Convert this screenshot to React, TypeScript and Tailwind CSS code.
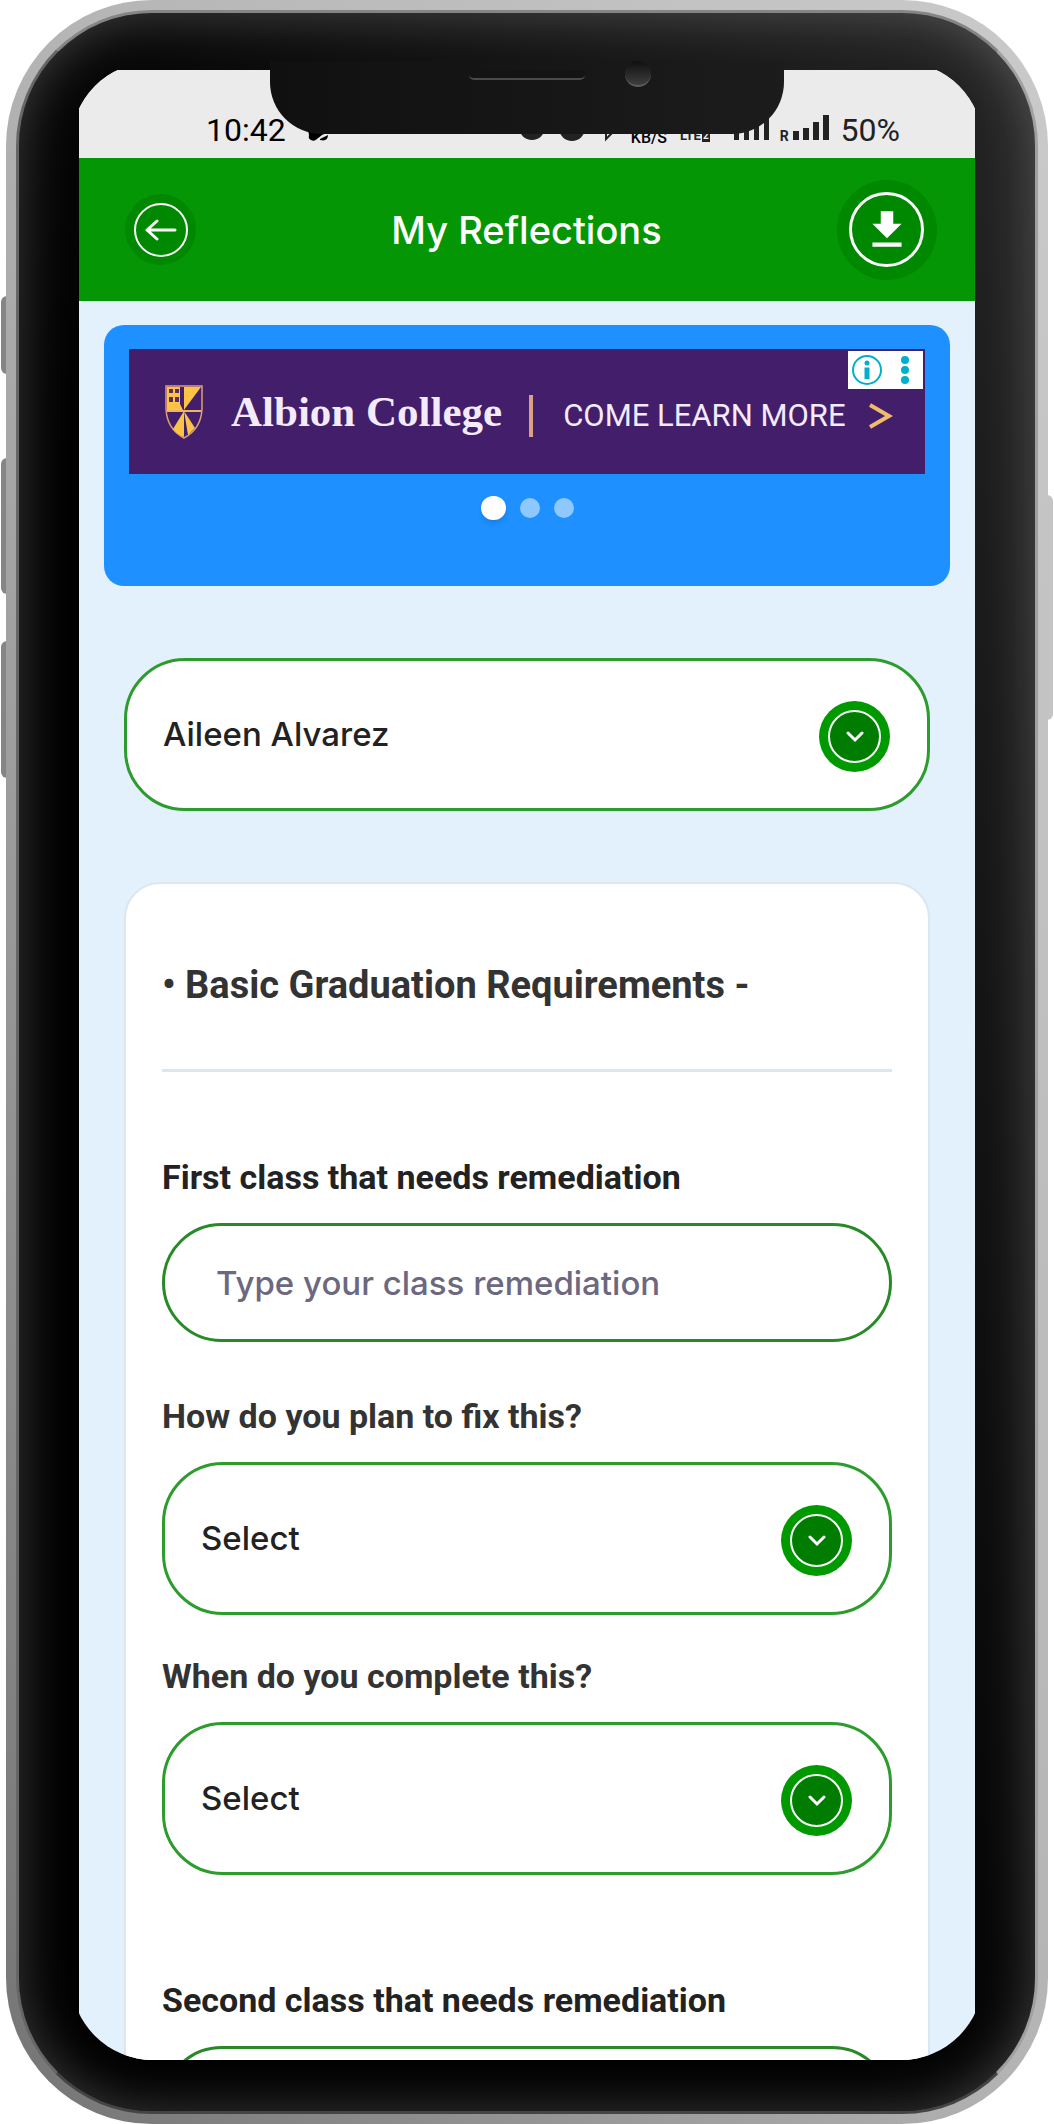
import { useState } from "react";

function StatusBar() {
  return (
    <div className="flex h-[88px] shrink-0 items-end justify-between bg-[#ebebeb] pr-[75px] pb-4 pl-[127px] font-['Roboto',sans-serif] text-[#222]">
      <div className="flex items-end gap-[22px]">
        <span className="text-[32px] leading-6 text-black">10:42</span>
        <svg className="h-[12px] w-[26px]" viewBox="0 0 26 12" fill="#000" aria-hidden="true">
          <path d="M0 0H26L14 5L9 9Q6 12 3 10Q0 9 1 5Z" />
          <path d="M12 9L20 5Q20 12 12 10Z" />
        </svg>
      </div>
      <div className="flex items-end">
        <svg className="mr-4 h-[34px] w-[98px]" viewBox="0 0 98 34" aria-hidden="true">
          <circle cx="15" cy="19" r="13" fill="#222" />
          <circle cx="55" cy="20" r="13" fill="#222" />
          <path d="M55 10V22L60 19" stroke="#ebebeb" strokeWidth="2" fill="none" />
          <path d="M82 12L96 24L89 31V6L96 13L82 24" stroke="#222" strokeWidth="2" fill="none" />
        </svg>
        <span className="mr-[13px] text-center text-[16px] leading-2 font-medium text-black">KB/S</span>
        <span className="mr-6 flex items-center gap-px text-[13px] leading-3 font-bold">
          LTE
          <span className="bg-[#222] px-px text-[10px] leading-[13px] text-[#ebebeb]">2</span>
        </span>
        <svg className="mr-2.5 h-[28px] w-[36px]" viewBox="0 0 36 28" fill="#222" aria-hidden="true">
          <path d="M0 11H5V26H0ZM10 8H15V26H10ZM20 4H25V26H20ZM30 0H35V26H30Z" />
        </svg>
        <span className="mr-1 text-[14px] leading-3 font-bold">R</span>
        <svg className="mr-3 h-[28px] w-[36px]" viewBox="0 0 36 28" fill="#222" aria-hidden="true">
          <path d="M0 17H6V26H0ZM10 14H16V26H10ZM20 8H26V26H20ZM30 1H36V26H30Z" />
        </svg>
        <span className="text-[32px] leading-6">50%</span>
      </div>
    </div>
  );
}

function Header() {
  return (
    <header className="flex h-[143px] shrink-0 items-center justify-between bg-[#059605] pr-[38px] pl-[46px]">
      <button type="button" aria-label="Back" className="flex size-[71px] items-center justify-center rounded-full bg-[#008800]">
        <span className="flex size-[54px] items-center justify-center rounded-full border-2 border-white">
          <svg className="h-[22px] w-[32px]" viewBox="0 0 32 22" fill="none" stroke="#fff" strokeWidth="3" strokeLinecap="round" strokeLinejoin="round" aria-hidden="true">
            <path d="M30 11H2M12 2L2 11L12 20" />
          </svg>
        </span>
      </button>
      <h1 className="pl-5 font-['Inter',sans-serif] text-[38px] leading-[44px] font-medium text-white">My Reflections</h1>
      <button type="button" aria-label="Download" className="flex size-[100px] items-center justify-center rounded-full bg-[#008800]">
        <span className="flex size-[75px] items-center justify-center rounded-full border-3 border-white">
          <svg className="size-[50px]" viewBox="0 0 24 24" fill="#fff" aria-hidden="true">
            <path d="M19 9h-4V3H9v6H5l7 7 7-7zM5 18v2h14v-2H5z" />
          </svg>
        </span>
      </button>
    </header>
  );
}

function Shield() {
  return (
    <svg className="h-[54px] w-[38px] shrink-0" viewBox="0 0 38 54" aria-hidden="true">
      <path d="M1 1H37V24Q36 44 19 53Q2 44 1 24Z" fill="#421e6b" stroke="#e0a070" strokeWidth="1.5" />
      <path d="M19 2H36L19 25Z" fill="#fbc447" />
      <path d="M2 2H15V19L18 25H2Z" fill="#fbc447" />
      <path d="M4 4H8V8H4ZM10 4H14V8H10ZM4 12H8V17H4ZM10 12H14V17H10Z" fill="#5a2c60" />
      <path d="M19 26L8 44Q13 50 19 52Z" fill="#fbc447" />
      <path d="M2 25H36V27H2Z" fill="#f0b45c" />
      <path d="M19 26L30 43L23 50Z" fill="#fbc447" />
    </svg>
  );
}

function Banner() {
  return (
    <section aria-label="Advertisement" className="mx-[25px] mt-6 h-[261px] shrink-0 rounded-[20px] bg-[#1e90ff] px-[25px] pt-6">
      <div className="relative flex h-[125px] items-center bg-[#421e6b] pr-8 pl-[36px]">
        <Shield />
        <span className="ml-7 font-['Liberation_Serif',serif] text-[43px] leading-[54px] font-bold whitespace-nowrap text-[#f3ebfb]">Albion College</span>
        <span className="mt-2 ml-[27px] h-[42px] w-1 bg-[#d9a083]" />
        <a href="#learn-more" className="mt-2 ml-[30px] flex flex-1 items-center justify-between text-[#f3ebfb]">
          <span className="font-['Roboto',sans-serif] text-[31px] leading-10 whitespace-nowrap">COME LEARN MORE</span>
          <svg className="h-[28px] w-[24px]" viewBox="0 0 24 28" fill="none" stroke="#f0bc6c" strokeWidth="4" aria-hidden="true">
            <path d="M1 3L20 14L1 25" />
          </svg>
        </a>
        <div className="absolute top-0.5 right-0.5 flex h-[38px] w-[75px] items-center justify-between bg-white pr-3.5 pl-1">
          <button type="button" aria-label="Ad information">
            <svg className="size-[30px]" viewBox="0 0 30 30" aria-hidden="true">
              <circle cx="15" cy="15" r="14" fill="none" stroke="#00aecd" strokeWidth="2" />
              <circle cx="15" cy="8" r="2.5" fill="#00aecd" />
              <path d="M12.500 12.500H17.500V24H12.500Z" fill="#00aecd" />
            </svg>
          </button>
          <button type="button" aria-label="Ad options">
            <svg className="h-[30px] w-2" viewBox="0 0 8 30" fill="#00aecd" aria-hidden="true">
              <circle cx="4" cy="5" r="4" />
              <circle cx="4" cy="15" r="4" />
              <circle cx="4" cy="25" r="4" />
            </svg>
          </button>
        </div>
      </div>
      <div className="mt-[22px] flex items-center justify-center gap-[14px]">
        <button type="button" aria-label="Slide 1" className="h-6 w-[25px] rounded-full bg-white shadow-md" />
        <button type="button" aria-label="Slide 2" className="size-5 rounded-full bg-white/50" />
        <button type="button" aria-label="Slide 3" className="size-5 rounded-full bg-white/50" />
      </div>
    </section>
  );
}

function Dropdown({ id, label, options }: { id: string; label?: string; options: string[] }) {
  const [value, setValue] = useState(options[0]);
  return (
    <div className="relative">
      <select
        id={id}
        aria-label={label}
        value={value}
        onChange={(e) => setValue(e.target.value)}
        className="block h-[153px] w-full appearance-none rounded-[61px] border-3 border-[#2c9c2c] bg-white pr-32 pl-9 font-['Inter',sans-serif] text-[33px] font-medium text-[#222]"
      >
        {options.map((o) => (
          <option key={o}>{o}</option>
        ))}
      </select>
      <span className="pointer-events-none absolute inset-y-0 right-10 flex items-center pt-1">
        <span className="flex size-[71px] items-center justify-center rounded-full bg-[#009a00]">
          <span className="flex size-[53px] items-center justify-center rounded-full border-2 border-white bg-[#007d00]">
            <svg className="h-[12px] w-[20px]" viewBox="0 0 20 12" fill="none" stroke="#fff" strokeWidth="3" strokeLinecap="round" aria-hidden="true">
              <path d="M3 2L10 9L17 2" />
            </svg>
          </span>
        </span>
      </span>
    </div>
  );
}

function FieldLabel({ htmlFor, strong, children }: { htmlFor: string; strong?: boolean; children: string }) {
  return (
    <label
      htmlFor={htmlFor}
      className={`mb-[26px] block font-['Roboto',sans-serif] text-[34px] leading-10 font-bold ${strong ? "text-[#222]" : "text-[#333]"}`}
    >
      {children}
    </label>
  );
}

function ClassField({ id, title }: { id: string; title: string }) {
  return (
    <div>
      <FieldLabel htmlFor={id} strong>
        {title}
      </FieldLabel>
      <input
        id={id}
        type="text"
        placeholder="Type your class remediation"
        className="block h-[119px] w-full rounded-[60px] border-3 border-[#268a26] bg-white px-[51px] font-['Inter',sans-serif] text-[33px] font-medium text-[#222] placeholder:text-[#6c6880]"
      />
    </div>
  );
}

function SelectField({ id, title }: { id: string; title: string }) {
  return (
    <div>
      <FieldLabel htmlFor={id}>{title}</FieldLabel>
      <Dropdown id={id} options={["Select"]} />
    </div>
  );
}

export default function App() {
  return (
    <div className="relative h-screen overflow-hidden bg-white px-[6px]">
      <span className="absolute top-[296px] left-px h-[78px] w-2 rounded-l-md bg-[#858585]" />
      <span className="absolute top-[458px] left-px h-[136px] w-2 rounded-l-md bg-[#858585]" />
      <span className="absolute top-[641px] left-px h-[137px] w-2 rounded-l-md bg-[#858585]" />
      <span className="absolute top-[495px] right-px h-[225px] w-2 rounded-r-md bg-[#c4c4c4]" />

      <div className="relative h-full rounded-[146px] bg-[linear-gradient(to_top_right,#747474,#949494_25%,#b4b4b4_50%,#cacaca)] p-[10px]">
        <div className="relative h-full rounded-[136px] border-3 border-t-[#858585] border-r-[#a0a0a0] border-b-[#444] border-l-[#666] bg-[linear-gradient(to_top_right,#000_40%,#080808_55%,#262626)] px-[52px] pt-[49px] pb-[51px] shadow-[inset_0_0_54px_rgba(255,255,255,0.24)]">
          <div className="h-full overflow-hidden rounded-[82px] px-2 pt-2">
            <div className="flex h-full flex-col bg-[#e3f1fd]">
              <StatusBar />
              <Header />
              <main className="flex min-h-0 flex-1 flex-col overflow-y-auto [scrollbar-width:none]">
                <Banner />
                <div className="mx-[45px] mt-[72px]">
                  <Dropdown id="student" label="Student" options={["Aileen Alvarez"]} />
                </div>
                <section className="mx-[45px] mt-[71px] rounded-[36px] border-2 border-[#dbe6ef] bg-white px-9 pt-[79px] pb-20">
                  <h2 className="font-['Roboto',sans-serif] text-[38px] leading-[44px] font-bold text-[#333]">• Basic Graduation Requirements -</h2>
                  <hr className="mt-[62px] mb-[85px] border-t-3 border-[#dbe6ef]" />
                  <ClassField id="first-class" title="First class that needs remediation" />
                  <div className="mt-[54px] mb-[105px] flex flex-col gap-[41px]">
                    <SelectField id="first-plan" title="How do you plan to fix this?" />
                    <SelectField id="first-when" title="When do you complete this?" />
                  </div>
                  <ClassField id="second-class" title="Second class that needs remediation" />
                </section>
              </main>
            </div>
          </div>

          <div className="absolute top-[48px] left-1/2 h-[73px] w-[514px] -translate-x-1/2 rounded-b-[52px] bg-[linear-gradient(to_right,#101010,#1c1c1c)]">
            <span className="absolute top-[9px] left-[199px] h-[10px] w-[116px] rounded-full border-b-2 border-[#4a4a4a] bg-[#141414]" />
            <span className="absolute top-0 left-[355px] size-[26px] rounded-full border-b-2 border-[#5c5c5c] bg-[linear-gradient(to_bottom,#101010,#3e3e3e)]" />
          </div>
        </div>
      </div>
    </div>
  );
}
